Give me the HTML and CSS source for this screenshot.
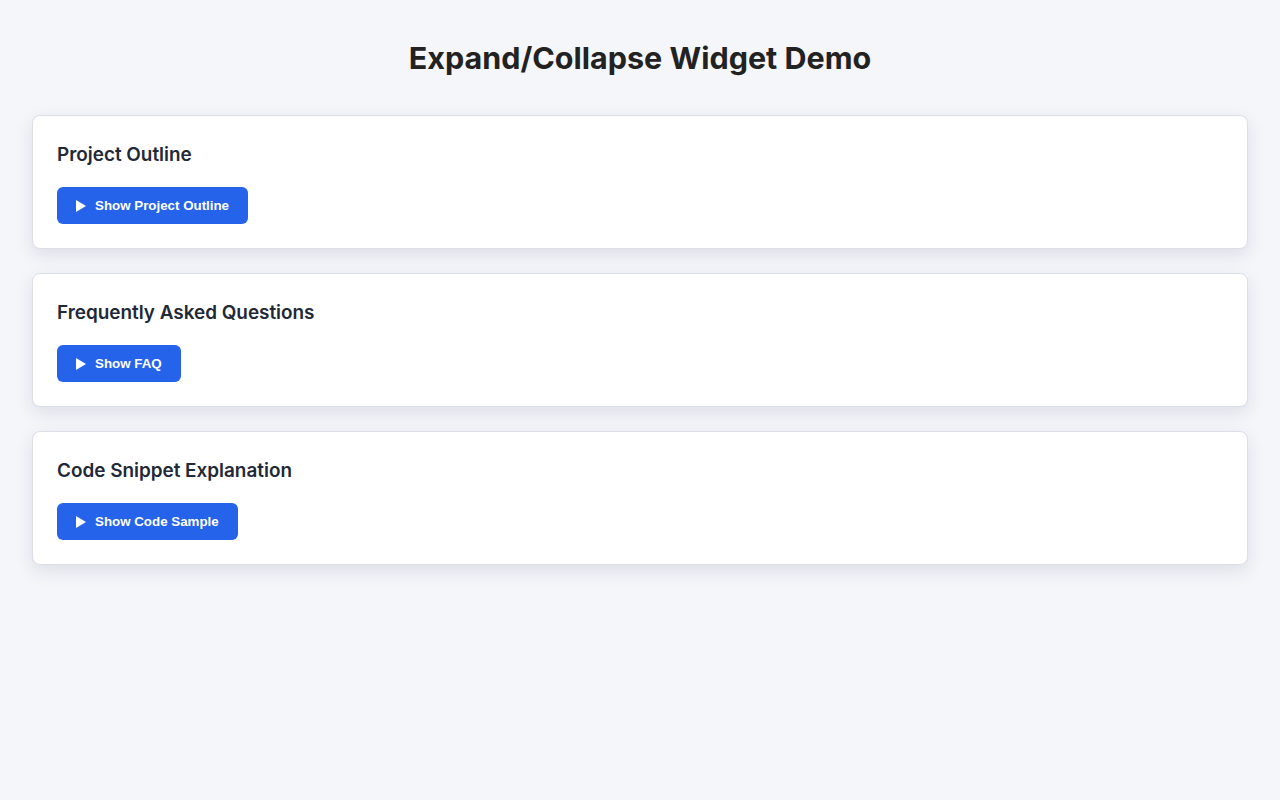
FILE: index.html
```html
<!DOCTYPE html>
<html lang="en">
<head>
    <meta charset="UTF-8">
    <meta name="viewport" content="width=device-width, initial-scale=1.0">
    <title>Expand/Collapse Widget Demo</title>
    <link rel="stylesheet" href="styles.css">
</head>
<body>

    <h1 class="page-title">Expand/Collapse Widget Demo</h1>

    <div class="widget-list">
        <!-- Project Outline -->
        <section class="widget">
            <h2 class="widget-title">Project Outline</h2>
            <button class="toggle-btn" type="button">
                <svg class="toggle-icon" viewBox="0 0 10 12" width="10" height="12"><polygon points="0,0 10,6 0,12" fill="currentColor"/></svg>
                Show Project Outline
            </button>
        </section>

        <!-- FAQ -->
        <section class="widget">
            <h2 class="widget-title">Frequently Asked Questions</h2>
            <button class="toggle-btn" type="button">
                <svg class="toggle-icon" viewBox="0 0 10 12" width="10" height="12"><polygon points="0,0 10,6 0,12" fill="currentColor"/></svg>
                Show FAQ
            </button>
        </section>

        <!-- Code Snippet -->
        <section class="widget">
            <h2 class="widget-title">Code Snippet Explanation</h2>
            <button class="toggle-btn" type="button">
                <svg class="toggle-icon" viewBox="0 0 10 12" width="10" height="12"><polygon points="0,0 10,6 0,12" fill="currentColor"/></svg>
                Show Code Sample
            </button>
        </section>
    </div>

</body>
</html>
```

FILE: styles.css
```css
/* Basic Styling */
body {
    font-family: Inter, "Noto Sans", sans-serif;
    background-color: #f5f6fa;
    color: #222;
    margin: 0;
    padding: 32px;
}

.page-title {
    text-align: center;
    font-size: 30.5px;
    font-weight: 700;
    line-height: 52px;
    margin: 0 0 31px;
}

.widget-list {
    display: flex;
    flex-direction: column;
    gap: 24px;
}

.widget {
    background-color: #fff;
    border: 1px solid #dcdfe8;
    border-radius: 8px;
    padding: 24px;
    box-shadow: 0px 6px 18px rgba(30, 40, 80, 0.11);
}

.widget-title {
    font-size: 18.9px;
    font-weight: 600;
    line-height: 30px;
    color: #1f2937;
    margin: 0 0 17px;
}

.toggle-btn {
    display: inline-flex;
    align-items: center;
    gap: 9px;
    height: 37px;
    padding: 0 19px;
    background-color: #2563eb;
    color: #fff;
    border: none;
    border-radius: 6px;
    font-family: "Liberation Sans", Arial, sans-serif;
    font-size: 13.333px;
    font-weight: 700;
    cursor: pointer;
}

.toggle-icon {
    display: block;
}
```
